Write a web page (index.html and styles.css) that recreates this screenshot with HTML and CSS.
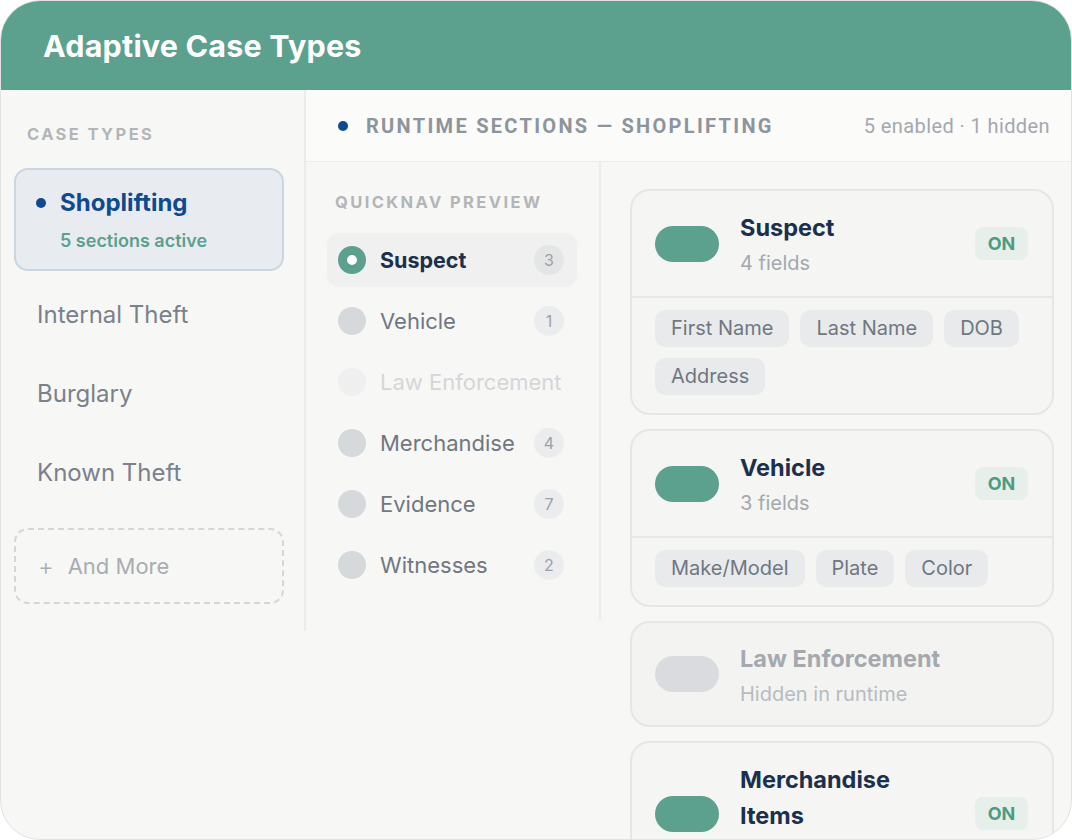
FILE: index.html
```html
<!DOCTYPE html>
<html lang="en">
<head>
    <meta charset="UTF-8">
    <meta name="viewport" content="width=device-width, initial-scale=1.0">
    <title>Adaptive Case Types</title>
    <link rel="stylesheet" href="styles.css">
</head>
<body>
<div class="frame">
    <div class="title_bar">Adaptive Case Types</div>
    <div class="main">
        <div class="types">
            <div class="label types_label">CASE TYPES</div>
            <div class="type_selected">
                <div class="type_name"><span class="dot"></span>Shoplifting</div>
                <div class="type_sub">5 sections active</div>
            </div>
            <div class="type_item">Internal Theft</div>
            <div class="type_item">Burglary</div>
            <div class="type_item">Known Theft</div>
            <div class="type_more"><span class="plus">+</span>And More</div>
        </div>
        <div class="runtime">
            <div class="runtime_head">
                <div class="runtime_title"><span class="dot"></span>RUNTIME SECTIONS — SHOPLIFTING</div>
                <div class="runtime_count">5 enabled · 1 hidden</div>
            </div>
            <div class="runtime_body">
                <div class="quicknav">
                    <div class="label quicknav_label">QUICKNAV PREVIEW</div>
                    <div class="nav_row active"><span class="nav_dot"></span><span class="nav_name">Suspect</span><span class="nav_count">3</span></div>
                    <div class="nav_row"><span class="nav_dot"></span><span class="nav_name">Vehicle</span><span class="nav_count">1</span></div>
                    <div class="nav_row hidden"><span class="nav_dot"></span><span class="nav_name">Law Enforcement</span></div>
                    <div class="nav_row"><span class="nav_dot"></span><span class="nav_name">Merchandise</span><span class="nav_count">4</span></div>
                    <div class="nav_row"><span class="nav_dot"></span><span class="nav_name">Evidence</span><span class="nav_count">7</span></div>
                    <div class="nav_row"><span class="nav_dot"></span><span class="nav_name">Witnesses</span><span class="nav_count">2</span></div>
                </div>
                <div class="sections">
                    <div class="section">
                        <div class="section_head">
                            <span class="toggle"></span>
                            <div class="section_text">
                                <div class="section_title">Suspect</div>
                                <div class="section_sub">4 fields</div>
                            </div>
                            <span class="on_badge">ON</span>
                        </div>
                        <div class="chips">
                            <span class="chip">First Name</span>
                            <span class="chip">Last Name</span>
                            <span class="chip">DOB</span>
                            <span class="chip">Address</span>
                        </div>
                    </div>
                    <div class="section">
                        <div class="section_head">
                            <span class="toggle"></span>
                            <div class="section_text">
                                <div class="section_title">Vehicle</div>
                                <div class="section_sub">3 fields</div>
                            </div>
                            <span class="on_badge">ON</span>
                        </div>
                        <div class="chips">
                            <span class="chip">Make/Model</span>
                            <span class="chip">Plate</span>
                            <span class="chip">Color</span>
                        </div>
                    </div>
                    <div class="section off">
                        <div class="section_head">
                            <span class="toggle"></span>
                            <div class="section_text">
                                <div class="section_title">Law Enforcement</div>
                                <div class="section_sub">Hidden in runtime</div>
                            </div>
                        </div>
                    </div>
                    <div class="section">
                        <div class="section_head">
                            <span class="toggle"></span>
                            <div class="section_text">
                                <div class="section_title">Merchandise Items</div>
                                <div class="section_sub">5 fields</div>
                            </div>
                            <span class="on_badge">ON</span>
                        </div>
                    </div>
                </div>
            </div>
        </div>
    </div>
</div>
</body>
</html>
```

FILE: styles.css
```css
body{
    margin: 0px;
    background: white;
    font-family: Inter, "Noto Sans", sans-serif;
}
.frame{
    width: 1072px;
    height: 840px;
    box-sizing: border-box;
    border: 1px solid #e2e2e0;
    border-radius: 40px;
    overflow: hidden;
    background: #f7f7f5;
}
.title_bar{
    height: 89px;
    background: #5ca08e;
    color: white;
    font-size: 30.5px;
    font-weight: 700;
    line-height: 90px;
    padding-left: 42px;
    letter-spacing: 0.2px;
}
.main{
    display: flex;
    align-items: flex-start;
}
.label{
    font-size: 16.5px;
    font-weight: 700;
    letter-spacing: 2.4px;
    color: #b3b5b8;
    line-height: 20px;
}
.dot{
    display: inline-block;
    width: 10px;
    height: 10px;
    border-radius: 50%;
    background: #0e4a92;
    flex: none;
}

/* left column */
.types{
    flex: none;
    padding: 34px 20px 27px 13px;
    border-right: 2px solid #ebebe9;
    box-sizing: border-box;
    width: 305px;
}
.types_label{
    margin-left: 13px;
    margin-bottom: 24px;
}
.type_selected{
    background: #e8ecf0;
    border: 2px solid #cad5e0;
    border-radius: 14px;
    padding: 18px 20px 16px 20px;
}
.type_name{
    display: flex;
    align-items: center;
    gap: 14px;
    font-size: 24px;
    font-weight: 700;
    color: #0f4a8f;
    line-height: 30px;
}
.type_sub{
    margin-top: 11px;
    padding-left: 24px;
    font-size: 18px;
    font-weight: 600;
    color: #5ca08e;
    line-height: 24px;
}
.type_item{
    height: 79px;
    line-height: 79px;
    padding-left: 23px;
    font-size: 24px;
    color: #7a818b;
}
.type_selected + .type_item{
    margin-top: 4px;
}
.type_more{
    margin-top: 16px;
    height: 76px;
    box-sizing: border-box;
    border: 2px dashed #d6d6d5;
    border-radius: 14px;
    display: flex;
    align-items: center;
    padding-left: 22px;
    font-size: 22px;
    color: #a8adb3;
}
.plus{
    font-size: 24px;
    font-weight: 300;
    margin-right: 14px;
}

/* runtime area */
.runtime{
    flex: 1;
}
.runtime_head{
    height: 72px;
    box-sizing: border-box;
    background: #fbfbfa;
    border-bottom: 1px solid #ececea;
    display: flex;
    align-items: center;
    justify-content: space-between;
    padding: 0 21px 0 32px;
    font-family: Roboto, Inter, sans-serif;
}
.runtime_title{
    display: flex;
    align-items: center;
    gap: 18px;
    font-size: 20px;
    font-weight: 700;
    letter-spacing: 2.3px;
    color: #8d949c;
}
.runtime_count{
    font-size: 20px;
    letter-spacing: 0.4px;
    color: #a3a8ae;
}
.runtime_body{
    display: flex;
    align-items: flex-start;
}
.quicknav{
    width: 295px;
    flex: none;
    box-sizing: border-box;
    padding: 30px 22px 28px 21px;
    border-right: 2px solid #ececea;
}
.quicknav_label{
    margin-left: 8px;
    margin-bottom: 21px;
}
.nav_row{
    height: 54px;
    display: flex;
    align-items: center;
    padding: 0 13px 0 11px;
    border-radius: 12px;
    margin-bottom: 7px;
}
.nav_row:last-child{
    margin-bottom: 0;
}
.nav_row.active{
    background: #eff0ef;
}
.nav_dot{
    width: 28px;
    height: 28px;
    border-radius: 50%;
    background: #d6d9dc;
    box-sizing: border-box;
    flex: none;
}
.active .nav_dot{
    background: white;
    border: 9px solid #5ca08e;
}
.nav_name{
    flex: 1;
    margin-left: 14px;
    font-size: 22px;
    color: #6f7782;
}
.active .nav_name{
    font-weight: 700;
    font-size: 21.5px;
    color: #1c2f4c;
}
.nav_row.hidden{
    opacity: 0.25;
}
.nav_count{
    width: 30px;
    height: 30px;
    border-radius: 50%;
    background: #ebeced;
    color: #9ca1a7;
    font-size: 16px;
    text-align: center;
    line-height: 30px;
}
.active .nav_count{
    background: #e4e6e6;
}

/* section cards */
.sections{
    flex: 1;
    padding: 27px 17px 0 29px;
    display: flex;
    flex-direction: column;
    gap: 14px;
}
.section{
    border: 2px solid #e6e7e5;
    border-radius: 20px;
    background: #f5f5f4;
}
.section_head{
    display: flex;
    align-items: center;
    padding: 19px 24px 19px 23px;
}
.toggle{
    width: 64px;
    height: 36px;
    border-radius: 18px;
    background: #5ca08e;
    flex: none;
}
.section_text{
    flex: 1;
    margin-left: 21px;
    margin-right: 26px;
}
.section_title{
    font-size: 23.5px;
    font-weight: 700;
    color: #1c2f4c;
    line-height: 36px;
}
.section_sub{
    margin-top: 3px;
    font-size: 20px;
    color: #a3a8ae;
    line-height: 28px;
}
.on_badge{
    width: 53px;
    height: 33px;
    border-radius: 8px;
    background: #e7efea;
    color: #4f9a80;
    font-size: 18px;
    font-weight: 700;
    text-align: center;
    line-height: 33px;
    flex: none;
}
.chips{
    border-top: 2px solid #e8e9e7;
    padding: 12px 23px 18px 23px;
    display: flex;
    flex-wrap: wrap;
    gap: 11px;
}
.chip{
    height: 37px;
    line-height: 37px;
    padding: 0 16px;
    border-radius: 10px;
    background: #e9eaeb;
    color: #6f7782;
    font-size: 20px;
}
.section.off{
    background: #f3f3f2;
}
.off .section_head{
    padding-top: 17.5px;
    padding-bottom: 17.5px;
}
.off .toggle{
    background: #d9dbde;
}
.off .section_title{
    color: #a4a9af;
}
.off .section_sub{
    color: #b7bbc0;
}
```
